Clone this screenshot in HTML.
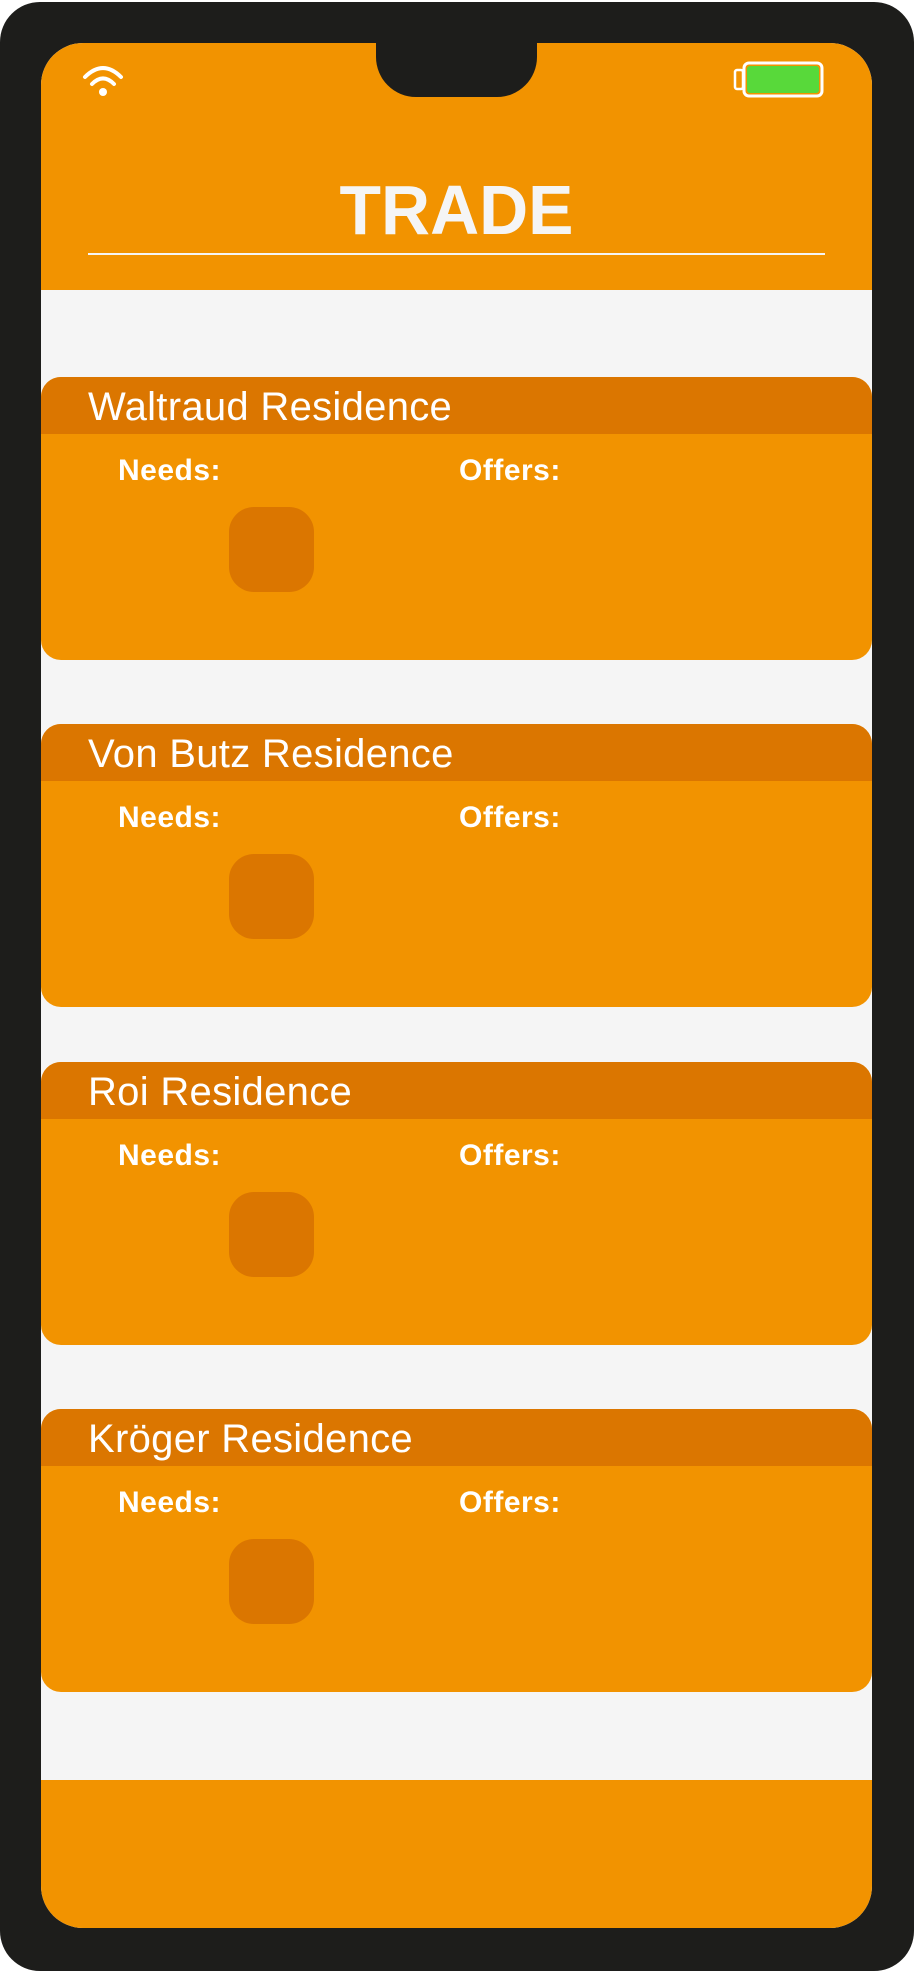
<!DOCTYPE html>
<html><head><style>
*{margin:0;padding:0;box-sizing:border-box}
body{width:914px;height:1971px;background:#fff;position:relative;overflow:hidden;font-family:"Liberation Sans",sans-serif}
.phone{position:absolute;left:0;top:2px;width:914px;height:1969px;background:#1d1d1b;border-radius:40px}
.screen{position:absolute;left:41px;top:43px;width:831px;height:1885px;background:#f5f5f5;border-radius:42px;overflow:hidden}
.hdr{position:absolute;left:0;top:0;width:831px;height:247px;background:#f29300}
.notch{position:absolute;left:335px;top:-2px;width:161px;height:56px;background:#1d1d1b;border-radius:0 0 40px 40px}
.title{position:absolute;left:0;width:831px;top:132px;text-align:center;color:#f5f5f5;font-weight:bold;font-size:70px;line-height:70px;transform:scaleX(0.97)}
.line{position:absolute;left:47px;top:210px;width:737px;height:2px;background:#f5f5f5}
.card{position:absolute;left:0;width:831px;height:283px;background:#f29300;border-radius:20px;overflow:hidden}
.ch{position:absolute;left:0;top:0;width:831px;height:57px;background:#db7600}
.ct{position:absolute;left:47px;top:6px;color:#fff;font-size:40px;font-weight:normal;line-height:48px;letter-spacing:0.3px}
.lb{position:absolute;top:77px;color:#fff;font-weight:bold;font-size:30px;line-height:34px;letter-spacing:0.5px}
.sq{position:absolute;left:188px;top:130px;width:85px;height:85px;background:#db7600;border-radius:25px}
.bot{position:absolute;left:0;top:1737px;width:831px;height:148px;background:#f29300}
</style></head><body>
<div class="phone"></div>
<div class="screen">
<div class="hdr">
<div class="notch"></div>
<svg style="position:absolute;left:34px;top:14px" width="56" height="42" viewBox="0 0 56 42">
<path d="M10 20 Q28 2 46 20" fill="none" stroke="#fff" stroke-width="4" stroke-linecap="round"/>
<path d="M17 27 Q28 16 39 27" fill="none" stroke="#fff" stroke-width="4" stroke-linecap="round"/>
<circle cx="28" cy="35" r="4" fill="#fff"/>
</svg>
<svg style="position:absolute;left:692px;top:18px" width="92" height="38" viewBox="0 0 92 38">
<rect x="2" y="9" width="8" height="19" rx="2" fill="none" stroke="#fff" stroke-width="2.5"/>
<rect x="11" y="2" width="78" height="33" rx="5" fill="none" stroke="#fff" stroke-width="3"/>
<rect x="14" y="5" width="72" height="27" rx="3" fill="#58d93a"/>
</svg>
<div class="title">TRADE</div>
<div class="line"></div>
</div>

<div class="card" style="top:334px"><div class="ch"></div><div class="ct">Waltraud Residence</div><div class="lb" style="left:77px">Needs:</div><div class="lb" style="left:418px">Offers:</div><div class="sq"></div></div>
<div class="card" style="top:681px"><div class="ch"></div><div class="ct">Von Butz Residence</div><div class="lb" style="left:77px">Needs:</div><div class="lb" style="left:418px">Offers:</div><div class="sq"></div></div>
<div class="card" style="top:1019px"><div class="ch"></div><div class="ct">Roi Residence</div><div class="lb" style="left:77px">Needs:</div><div class="lb" style="left:418px">Offers:</div><div class="sq"></div></div>
<div class="card" style="top:1366px"><div class="ch"></div><div class="ct">Kröger Residence</div><div class="lb" style="left:77px">Needs:</div><div class="lb" style="left:418px">Offers:</div><div class="sq"></div></div>

<div class="bot"></div>
</div>
</body></html>
